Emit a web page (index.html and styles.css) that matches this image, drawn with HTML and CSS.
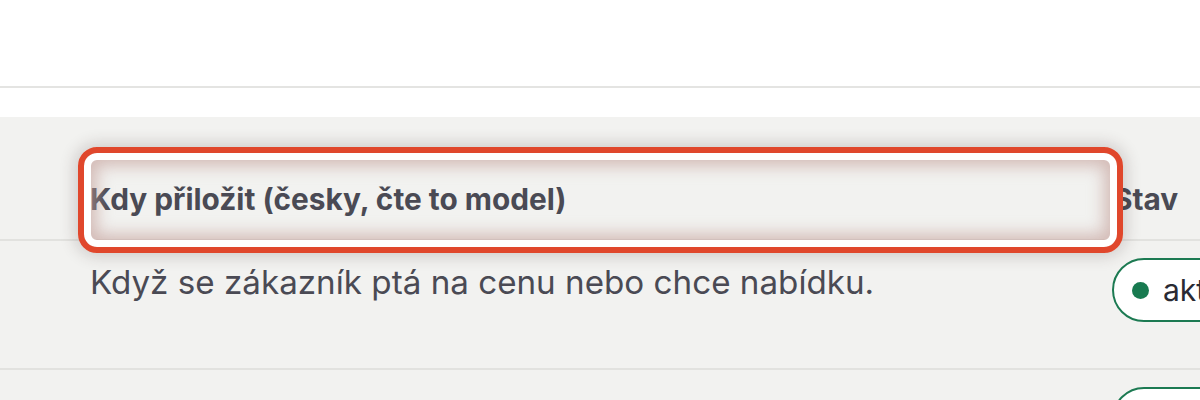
FILE: index.html
```html
<!DOCTYPE html>
<html lang="cs">
<head>
<meta charset="utf-8">
<title>Přílohy</title>
<link rel="stylesheet" href="styles.css">
</head>
<body>
<div class="topbar"></div>
<div class="gap"></div>
<div class="panel">
  <div class="row head">
    <div class="cell c1">
      <span class="hl"></span>
      Kdy přiložit (česky, čte to model)
    </div>
    <div class="cell c2">Stav</div>
  </div>
  <div class="row body">
    <div class="cell c1">Když se zákazník ptá na cenu nebo chce nabídku.</div>
    <div class="cell c2"><span class="pill"><span class="dot"></span>aktivní</span></div>
  </div>
  <div class="row body">
    <div class="cell c1"></div>
    <div class="cell c2"><span class="pill"><span class="dot"></span>aktivní</span></div>
  </div>
</div>
</body>
</html>
```
FILE: styles.css
```css
html, body {
  margin: 0;
  padding: 0;
  background: #ffffff;
  overflow: hidden;
}
body {
  font-family: Inter, "Noto Sans", sans-serif;
  color: #4a4a54;
  width: 1200px;
  height: 400px;
}
.topbar {
  height: 86px;
  border-bottom: 2px solid #e4e4e2;
  background: #fff;
}
.gap {
  height: 29px;
  background: #fff;
}
.panel {
  background: #f2f2f0;
  height: 300px;
}
.row {
  display: grid;
  grid-template-columns: 1023px 87px;
  padding-left: 90px;
  border-bottom: 2px solid #e2e2df;
}
.row.head {
  height: 122px;
  align-items: end;
}
.row.body {
  height: 127px;
  align-items: start;
}
.cell {
  white-space: nowrap;
}
.head .cell {
  font-weight: 700;
  font-size: 29.8px;
  line-height: 36px;
  padding-bottom: 22px;
}
.head .c1 {
  position: relative;
}
.hl {
  position: absolute;
  left: -12px;
  top: -34px;
  width: 1033px;
  height: 94px;
  border: 6px solid #e0472c;
  border-radius: 19px;
  box-shadow:
    0 0 16px 3px rgba(60, 40, 40, 0.2),
    inset 0 0 0 7px #ffffff,
    inset 0 0 16px 13px rgba(195, 158, 152, 0.65);
  z-index: 2;
  pointer-events: none;
}
.body .cell {
  font-size: 33.2px;
  line-height: 40px;
  padding-top: 21px;
}
.body .c2 {
  padding-top: 17px;
}
.pill {
  display: inline-flex;
  align-items: center;
  gap: 14px;
  height: 62px;
  padding: 0 22px 0 18px;
  border: 2px solid #1c7a52;
  border-radius: 33px;
  background: #fff;
  color: #2a2a33;
  font-size: 30px;
  margin-left: -1px;
  box-sizing: border-box;
  height: 64px;
}
.dot {
  flex: none;
  width: 17px;
  height: 17px;
  border-radius: 50%;
  background: #187a50;
}
```
